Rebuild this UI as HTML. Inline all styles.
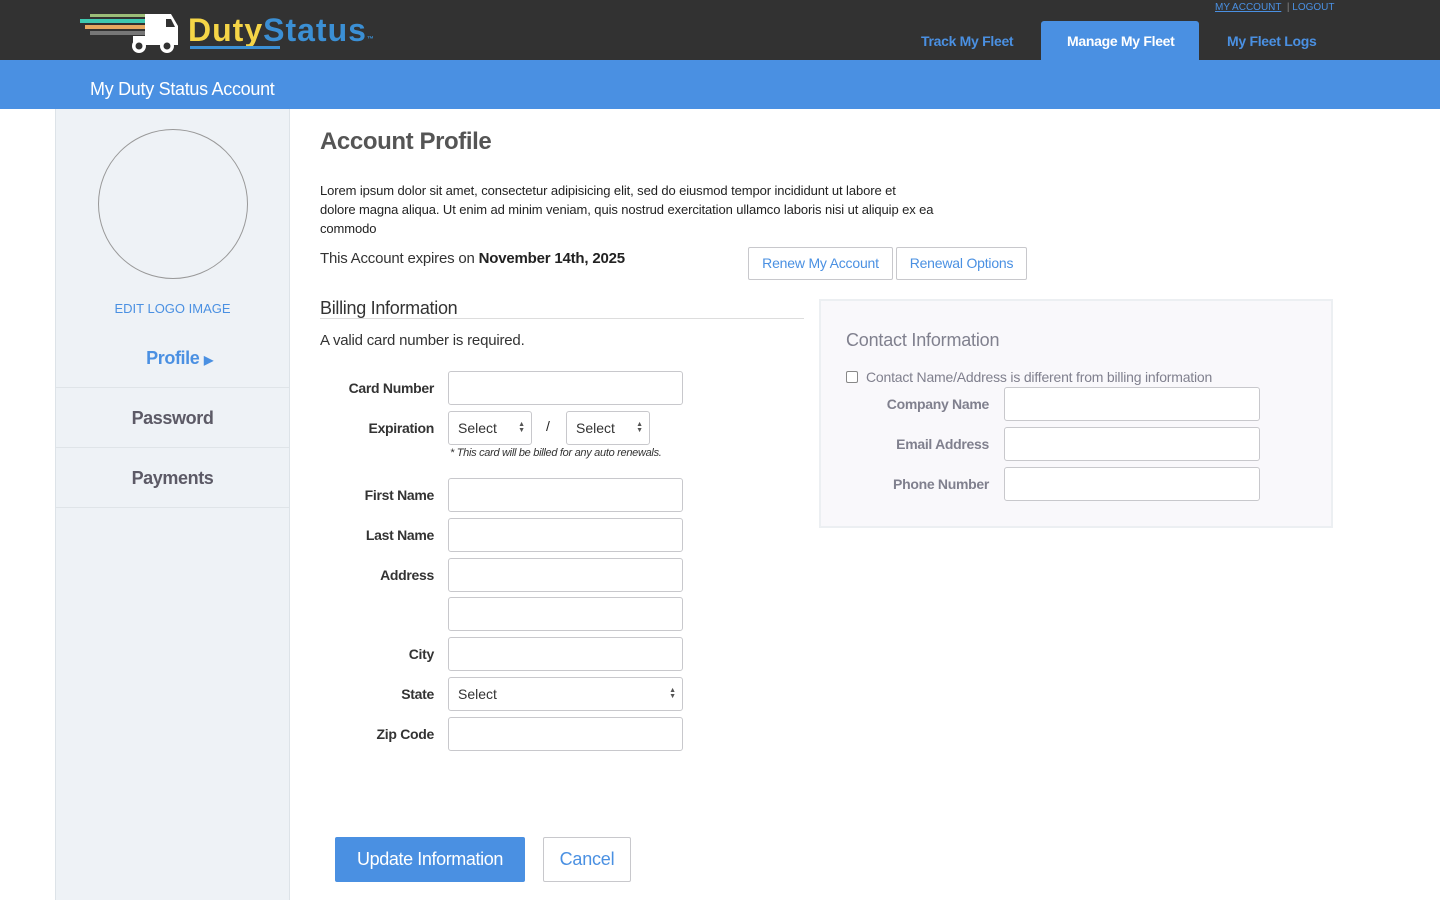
<!DOCTYPE html>
<html><head><meta charset="utf-8"><style>
*{box-sizing:border-box;margin:0;padding:0}
body{width:1440px;height:900px;overflow:hidden;background:#fff;font-family:"Liberation Sans",sans-serif;position:relative;color:#222}
.a{position:absolute}
.hdr{left:0;top:0;width:1440px;height:60px;background:#323232}
.bar{left:0;top:60px;width:1440px;height:49px;background:#4a90e2}
.nav{font-size:14px;font-weight:bold;color:#4a90e2;top:33px;letter-spacing:-0.3px}
.side{left:55px;top:109px;width:235px;height:791px;background:#eef2f6;border-left:1px solid #dde3e8;border-right:1px solid #dde3e8}
.si{left:56px;width:233px;height:60px;border-bottom:1px solid #dfe4e8;text-align:center;font-size:18px;font-weight:bold;color:#5c5a66;line-height:60px;letter-spacing:-0.4px}
.inp{background:#fff;border:1px solid #c8c8cc;border-radius:3px;height:34px}
.lbl{font-size:14px;font-weight:bold;color:#333;text-align:right;width:120px;letter-spacing:-0.3px}
.sel{font-size:14px;color:#333;padding-left:9px;line-height:32px}
.arr{position:absolute;right:6px;top:10px;font-size:7px;line-height:6px;color:#555}
.btn{border:1px solid #c8c8cc;border-radius:2px;color:#4a90e2;font-size:14px;text-align:center;letter-spacing:-0.2px}
.cl{font-size:14px;font-weight:bold;color:#80808e;text-align:right;width:160px;letter-spacing:-0.3px}
</style></head><body>
<div class="a hdr"></div>
<svg class="a" style="left:70px;top:10px" width="115" height="46" viewBox="0 0 115 46">
<rect x="20" y="4" width="55" height="3" fill="#b5e08a" opacity=".8"/>
<rect x="10" y="9" width="65" height="4" fill="#3fc9b0"/>
<rect x="15" y="15" width="60" height="4" fill="#e8a860"/>
<rect x="20" y="21" width="55" height="4" fill="#777"/>
<path d="M75 4h26l7 12v18H75z" fill="#fff"/><path d="M96 9h5l4 8h-9z" fill="#323232"/>
<rect x="63" y="26" width="45" height="9" fill="#fff"/>
<circle cx="69" cy="36" r="7" fill="#fff"/><circle cx="69" cy="36" r="3.5" fill="#323232"/>
<circle cx="97" cy="36" r="7" fill="#fff"/><circle cx="97" cy="36" r="3.5" fill="#323232"/>
</svg>
<div class="a" style="left:188px;top:12px;font-size:32px;font-weight:bold;letter-spacing:1px"><span style="color:#f5d547">Duty</span><span style="color:#3b8fd4">Status</span><span style="color:#3b8fd4;font-size:7px">™</span></div>
<div class="a" style="left:190px;top:46px;width:90px;height:3px;background:#3b8fd4"></div>
<div class="a" style="left:1215px;top:2px;font-size:10px;color:#4a90e2"><u>MY ACCOUNT</u> &nbsp;<span style="color:#888">|</span> LOGOUT</div>
<div class="a nav" style="left:921px">Track My Fleet</div>
<div class="a" style="left:1041px;top:21px;width:158px;height:39px;background:#4a90e2;border-radius:3px 3px 0 0"></div>
<div class="a nav" style="left:1067px;color:#fff">Manage My Fleet</div>
<div class="a nav" style="left:1227px">My Fleet Logs</div>
<div class="a bar"></div>
<div class="a" style="left:90px;top:79px;font-size:18px;color:#fff;letter-spacing:-0.3px">My Duty Status Account</div>
<div class="a side"></div>
<div class="a" style="left:98px;top:129px;width:150px;height:150px;border-radius:50%;border:1px solid #999"></div>
<div class="a" style="left:56px;top:301px;width:233px;text-align:center;font-size:13px;color:#4a90e2">EDIT LOGO IMAGE</div>
<div class="a si" style="top:328px;color:#4a90e2;padding-left:14px">Profile <span style="font-size:12px">▶</span></div>
<div class="a si" style="top:388px">Password</div>
<div class="a si" style="top:448px">Payments</div>
<div class="a" style="left:320px;top:128px;font-size:24px;font-weight:bold;color:#555;letter-spacing:-0.4px">Account Profile</div>
<div class="a" style="left:320px;top:181px;width:660px;font-size:13px;line-height:19px;color:#222;letter-spacing:-0.1px">Lorem ipsum dolor sit amet, consectetur adipisicing elit, sed do eiusmod tempor incididunt ut labore et<br>dolore magna aliqua. Ut enim ad minim veniam, quis nostrud exercitation ullamco laboris nisi ut aliquip ex ea<br>commodo</div>
<div class="a" style="left:320px;top:250px;font-size:15px;color:#333;letter-spacing:-0.2px">This Account expires on <b style="color:#222">November 14th, 2025</b></div>
<div class="a btn" style="left:748px;top:247px;width:145px;height:33px;line-height:31px">Renew My Account</div>
<div class="a btn" style="left:896px;top:247px;width:131px;height:33px;line-height:31px">Renewal Options</div>
<div class="a" style="left:320px;top:298px;font-size:18px;color:#333;letter-spacing:-0.3px">Billing Information</div>
<div class="a" style="left:320px;top:318px;width:484px;height:1px;background:#ddd"></div>
<div class="a" style="left:320px;top:332px;font-size:15px;color:#333;letter-spacing:-0.2px">A valid card number is required.</div>

<div class="a lbl" style="left:314px;top:380px">Card Number</div><div class="a inp" style="left:448px;top:371px;width:235px"></div>
<div class="a lbl" style="left:314px;top:420px">Expiration</div>
<div class="a inp sel" style="left:448px;top:411px;width:84px">Select<span class="arr">▲<br>▼</span></div>
<div class="a" style="left:546px;top:418px;font-size:14px">/</div>
<div class="a inp sel" style="left:566px;top:411px;width:84px">Select<span class="arr">▲<br>▼</span></div>
<div class="a" style="left:450px;top:447px;font-size:11px;font-style:italic;color:#333;letter-spacing:-0.3px">* This card will be billed for any auto renewals.</div>
<div class="a lbl" style="left:314px;top:487px">First Name</div><div class="a inp" style="left:448px;top:478px;width:235px"></div>
<div class="a lbl" style="left:314px;top:527px">Last Name</div><div class="a inp" style="left:448px;top:518px;width:235px"></div>
<div class="a lbl" style="left:314px;top:567px">Address</div><div class="a inp" style="left:448px;top:558px;width:235px"></div>
<div class="a inp" style="left:448px;top:597px;width:235px"></div>
<div class="a lbl" style="left:314px;top:646px">City</div><div class="a inp" style="left:448px;top:637px;width:235px"></div>
<div class="a lbl" style="left:314px;top:686px">State</div><div class="a inp sel" style="left:448px;top:677px;width:235px">Select<span class="arr">▲<br>▼</span></div>
<div class="a lbl" style="left:314px;top:726px">Zip Code</div><div class="a inp" style="left:448px;top:717px;width:235px"></div>

<div class="a" style="left:335px;top:837px;width:190px;height:45px;background:#4a90e2;border-radius:2px;color:#fff;font-size:18px;text-align:center;line-height:45px;letter-spacing:-0.4px">Update Information</div>
<div class="a btn" style="left:543px;top:837px;width:88px;height:45px;line-height:43px;font-size:18px">Cancel</div>

<div class="a" style="left:819px;top:299px;width:514px;height:229px;background:#f9f8fb;border:2px solid #eceff2"></div>
<div class="a" style="left:846px;top:330px;font-size:18px;color:#80808e;letter-spacing:-0.2px">Contact Information</div>
<div class="a" style="left:846px;top:371px;width:12px;height:12px;border:1px solid #888;border-radius:2px;background:#fff"></div>
<div class="a" style="left:866px;top:369px;font-size:14px;color:#80808e;letter-spacing:-0.2px">Contact Name/Address is different from billing information</div>
<div class="a cl" style="left:829px;top:396px">Company Name</div><div class="a inp" style="left:1004px;top:387px;width:256px"></div>
<div class="a cl" style="left:829px;top:436px">Email Address</div><div class="a inp" style="left:1004px;top:427px;width:256px"></div>
<div class="a cl" style="left:829px;top:476px">Phone Number</div><div class="a inp" style="left:1004px;top:467px;width:256px"></div>
</body></html>
